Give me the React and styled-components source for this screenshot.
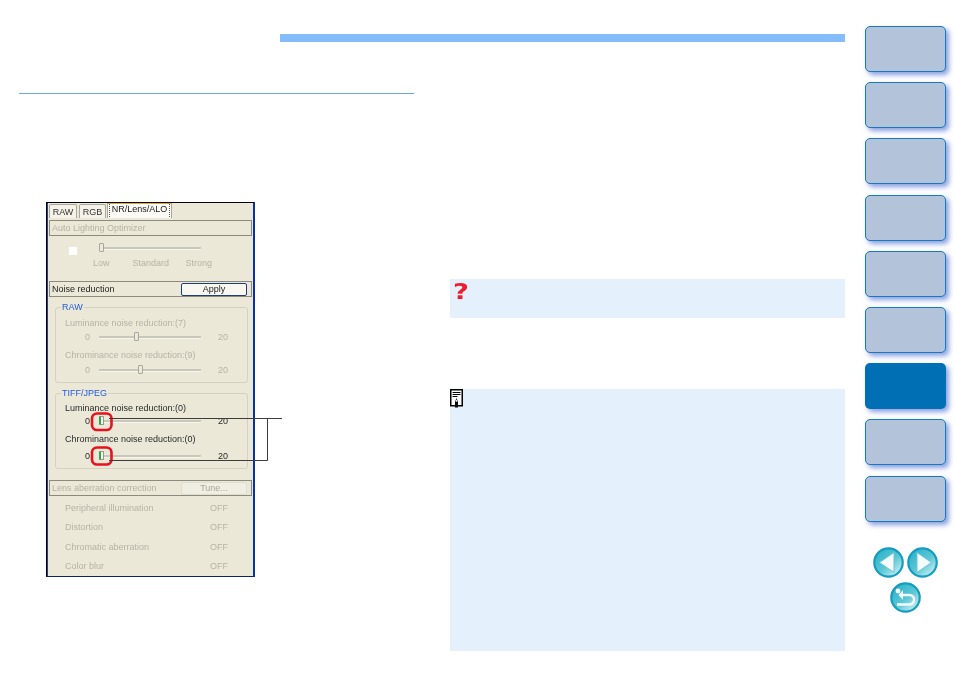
import React from "react";
import styled, { createGlobalStyle } from "styled-components";

const GlobalStyle = createGlobalStyle`
  html, body {
    margin: 0;
    padding: 0;
    background: #fff;
    font-family: "Liberation Sans", Arial, sans-serif;
  }
`;

const NAV_ITEMS = [false, false, false, false, false, false, true, false, false];

const App = () => {
  return (
    <Page>
      <GlobalStyle />
      <Main>
        <TopBar />
        <Columns>
          <LeftColumn>
            <Rule />
            <ShotPanel />
          </LeftColumn>
          <RightColumn>
            <NoteBox $height={39}>
              <QuestionMark>?</QuestionMark>
            </NoteBox>
            <NoteBox $height={262} $gap={71}>
              <MemoIcon />
            </NoteBox>
          </RightColumn>
        </Columns>
      </Main>
      <Nav>
        <NavList>
          {NAV_ITEMS.map((active, i) => (
            <NavButton key={i} $active={active} />
          ))}
        </NavList>
        <Arrows>
          <ArrowRow>
            <RoundIcon kind="prev" />
            <RoundIcon kind="next" />
          </ArrowRow>
          <RoundIcon kind="home" />
        </Arrows>
      </Nav>
    </Page>
  );
};

const ShotPanel = () => (
  <Panel>
    <PanelInner>
      <Tabs>
        <Tab $width={28}>RAW</Tab>
        <Tab $width={27}>RGB</Tab>
        <ActiveTab>
          <span>NR/Lens/ALO</span>
        </ActiveTab>
      </Tabs>

      <SectionHeader $disabled $top={2}>Auto Lighting Optimizer</SectionHeader>
      <AloRow>
        <CheckBox />
        <AloSlider>
          <Slider value={0} />
          <AloLabels>
            <Faint>Low</Faint>
            <Faint>Standard</Faint>
            <Faint>Strong</Faint>
          </AloLabels>
        </AloSlider>
      </AloRow>

      <SectionHeader $top={10}>
        Noise reduction
        <PanelButton>Apply</PanelButton>
      </SectionHeader>

      <Group $top={10} $pad={10}>
        <Legend>RAW</Legend>
        <SliderBlock label="Luminance noise reduction:(7)" value={35} gap={2} height={32} disabled />
        <SliderBlock label="Chrominance noise reduction:(9)" value={39} gap={3} height={32} disabled />
      </Group>

      <Group $top={10} $pad={9}>
        <Legend>TIFF/JPEG</Legend>
        <SliderBlock label="Luminance noise reduction:(0)" value={0} gap={1} height={31} green />
        <SliderBlock label="Chrominance noise reduction:(0)" value={0} gap={5} height={32} green />
      </Group>

      <SectionHeader $disabled $top={11}>
        Lens aberration correction
        <PanelButton $disabled>Tune...</PanelButton>
      </SectionHeader>

      <LensRows>
        {["Peripheral illumination", "Distortion", "Chromatic aberration", "Color blur"].map((name) => (
          <LensRow key={name}>
            <Faint>{name}</Faint>
            <Faint>OFF</Faint>
          </LensRow>
        ))}
      </LensRows>
    </PanelInner>
    <Callouts width="240" height="300" viewBox="0 0 240 300">
      <rect x="45" y="210.5" width="19.5" height="16.5" rx="5" fill="none" stroke="#e8111c" strokeWidth="2.6" />
      <rect x="45" y="244.5" width="19.5" height="17" rx="5" fill="none" stroke="#e8111c" strokeWidth="2.6" />
      <path d="M62 215.5H235M62 257.5H220.5V215.5" fill="none" stroke="#3c3c3c" strokeWidth="1" />
    </Callouts>
  </Panel>
);

const SliderBlock = ({ label, value, gap, height, disabled, green }) => (
  <SliderWrap $height={height}>
    <SliderLabel $disabled={disabled}>{label}</SliderLabel>
    <SliderLine $disabled={disabled} $gap={gap}>
      <span>0</span>
      <Slider value={value} green={green} />
      <span>20</span>
    </SliderLine>
  </SliderWrap>
);

const Slider = ({ value, green }) => (
  <Track>
    <Thumb $green={green} style={{ left: value }} />
  </Track>
);

const MemoIcon = () => (
  <MemoSvg width="14" height="20" viewBox="0 0 14 20">
    <rect x="0.75" y="0.75" width="11.5" height="16" fill="#fff" stroke="#000" strokeWidth="1.5" />
    <path d="M2.5 3.5H10.5M2.5 5.5H10.5M2.5 7.5H7.5" stroke="#000" strokeWidth="1" />
    <path d="M5 13L6.5 9L8 13V18.5H5Z" fill="#000" />
    <rect x="5.9" y="10.8" width="1.3" height="2" fill="#e8e8e8" />
  </MemoSvg>
);

const RoundIcon = ({ kind }) => (
  <svg width="31" height="31" viewBox="0 0 31 31">
    <defs>
      <linearGradient id={`disc-${kind}`} x1="0.15" y1="0.1" x2="0.85" y2="0.9">
        <stop offset="0" stopColor="#2fb4c9" />
        <stop offset="0.55" stopColor="#5cc7d6" />
        <stop offset="1" stopColor="#c4edf1" />
      </linearGradient>
    </defs>
    <circle cx="15.5" cy="15.5" r="14.2" fill={`url(#disc-${kind})`} stroke="#159dbf" strokeWidth="2.2" />
    {kind === "prev" && (
      <path d="M21 5.5V25.5L6.5 15.5Z" fill="#f4fcfd" stroke="#6cc4dc" strokeWidth="1" strokeLinejoin="round" />
    )}
    {kind === "next" && (
      <path d="M10 5.5V25.5L24.5 15.5Z" fill="#f4fcfd" stroke="#6cc4dc" strokeWidth="1" strokeLinejoin="round" />
    )}
    {kind === "home" && (
      <g>
        <circle cx="8" cy="9" r="2.4" fill="#f4fcfd" />
        <path d="M13 8V18L8.5 13Z" fill="#f4fcfd" />
        <path d="M12 13H19C23 13 24.5 16 24 18.5C23.5 21 21.5 22.5 19 22.5H7" fill="none" stroke="#f4fcfd" strokeWidth="2.4" />
      </g>
    )}
  </svg>
);

const Page = styled.div`
  display: flex;
  width: 954px;
  height: 674px;
  overflow: hidden;
  background: #fff;
`;

const Main = styled.div`
  width: 826px;
  margin-left: 19px;
  display: flex;
  flex-direction: column;
`;

const TopBar = styled.div`
  height: 8px;
  margin: 34px 0 0 261px;
  background: #85bcff;
`;

const Columns = styled.div`
  display: flex;
  justify-content: space-between;
  margin-top: 51px;
`;

const LeftColumn = styled.div`
  width: 395px;
`;

const Rule = styled.div`
  height: 1px;
  background: #6ba6ee;
`;

const RightColumn = styled.div`
  width: 395px;
  padding-top: 186px;
`;

const NoteBox = styled.div`
  position: relative;
  height: ${(p) => p.$height}px;
  margin-top: ${(p) => p.$gap || 0}px;
  background: #e4f0fc;
`;

const QuestionMark = styled.span`
  position: absolute;
  left: 3px;
  top: 1px;
  font-family: "DejaVu Sans", sans-serif;
  font-weight: bold;
  font-size: 22px;
  line-height: 24px;
  color: #ee1c2e;
  text-shadow: 0 0 1px #fff;
  transform: scaleX(1.25);
  transform-origin: left top;
`;

const MemoSvg = styled.svg`
  position: absolute;
  left: 0;
  top: 0;
  display: block;
`;

const Panel = styled.div`
  position: relative;
  width: 209px;
  height: 375px;
  margin: 108px 0 0 27px;
  box-sizing: border-box;
  border-top: 1px solid #000;
  border-left: 1px solid #000;
  border-bottom: 1px solid #0a246a;
  border-right: 2px solid #0831a8;
`;

const PanelInner = styled.div`
  height: 100%;
  box-sizing: border-box;
  padding: 0 1px 0 1px;
  background: #ebe8d8;
  border-left: 1px solid #1a3fb0;
  font-size: 9px;
  color: #2a2a2a;
  overflow: hidden;
  filter: blur(0.3px);
`;

const Tabs = styled.div`
  display: flex;
  align-items: flex-end;
  gap: 2px;
  height: 15px;
`;

const Tab = styled.div`
  width: ${(p) => p.$width}px;
  height: 14px;
  box-sizing: border-box;
  border: 1px solid #a8a89a;
  border-bottom: none;
  border-radius: 2px 2px 0 0;
  background: #f5f3e9;
  text-align: center;
  font-size: 9px;
  line-height: 14px;
  color: #333;
`;

const ActiveTab = styled.div`
  width: 65px;
  height: 16px;
  margin-left: -1px;
  box-sizing: border-box;
  border-top: 2px solid #eba22e;
  border-left: 1px solid #a8a89a;
  border-right: 1px solid #a8a89a;
  background: #fbfaf4;
  text-align: center;
  line-height: 11px;
  color: #222;

  span {
    display: block;
    margin: 0 1px;
    height: 13px;
    border-left: 1px dotted #555;
    border-right: 1px dotted #555;
  }
`;

const SectionHeader = styled.div`
  display: flex;
  align-items: center;
  justify-content: space-between;
  height: 16px;
  margin-top: ${(p) => p.$top}px;
  padding: 0 4px 0 2px;
  box-sizing: border-box;
  border: 1px solid #8b8a7c;
  color: ${(p) => (p.$disabled ? "#b5b3a4" : "#222")};
  font-size: 9px;
`;

const PanelButton = styled.div`
  width: 66px;
  height: 13px;
  box-sizing: border-box;
  text-align: center;
  font-size: 9px;
  line-height: 11px;
  border-radius: 2px;
  border: 1px solid ${(p) => (p.$disabled ? "#e0ddce" : "#1c3f78")};
  background: ${(p) => (p.$disabled ? "#f0eee2" : "#f8f7f0")};
  color: ${(p) => (p.$disabled ? "#a8a698" : "#222")};
`;

const AloRow = styled.div`
  display: flex;
  height: 28px;
  padding: 7px 0 0 20px;
`;

const CheckBox = styled.div`
  width: 8px;
  height: 8px;
  margin-top: 4px;
  background: #fff;
`;

const AloSlider = styled.div`
  margin-left: 22px;
  width: 113px;
`;

const AloLabels = styled.div`
  display: flex;
  margin: 8px 0 0 -6px;

  span:nth-child(2) {
    margin: 0 auto 0 23px;
  }
`;

const Faint = styled.span`
  color: #b5b3a4;
`;

const Track = styled.div`
  position: relative;
  width: 102px;
  height: 2px;
  margin-top: 4px;
  background: #c9c7b8;
  border-bottom: 1px solid #f7f6ee;
`;

const Thumb = styled.div`
  position: absolute;
  top: -4px;
  width: 5px;
  height: 9px;
  box-sizing: border-box;
  border-radius: 1px;
  border: 1px solid ${(p) => (p.$green ? "#9a9a8c" : "#a9a79a")};
  border-left: ${(p) => (p.$green ? "2px solid #2fa34f" : "1px solid #a9a79a")};
  background: ${(p) => (p.$green ? "#f2f7ea" : "#ece9dc")};
`;

const Group = styled.div`
  position: relative;
  height: 76px;
  margin: ${(p) => p.$top}px 4px 0 6px;
  padding: ${(p) => p.$pad}px 0 0 9px;
  box-sizing: border-box;
  border: 1px solid #d4d1c2;
  border-radius: 3px;
`;

const Legend = styled.span`
  position: absolute;
  top: -6px;
  left: 5px;
  padding: 0 1px;
  background: #ebe8d8;
  color: #1f5be0;
  font-size: 9px;
  line-height: 11px;
`;

const SliderWrap = styled.div`
  height: ${(p) => p.$height}px;
`;

const SliderLabel = styled.div`
  line-height: 11px;
  color: ${(p) => (p.$disabled ? "#b5b3a4" : "#2a2a2a")};
`;

const SliderLine = styled.div`
  display: flex;
  align-items: center;
  height: 12px;
  margin: ${(p) => p.$gap}px 0 0 20px;
  color: ${(p) => (p.$disabled ? "#b5b3a4" : "#2a2a2a")};

  ${Track} {
    margin: 0 0 0 9px;
  }

  span:last-child {
    margin-left: 17px;
  }
`;

const LensRows = styled.div`
  display: flex;
  flex-direction: column;
  gap: 8.3px;
  padding: 7px 24px 0 16px;
`;

const LensRow = styled.div`
  display: flex;
  justify-content: space-between;
  line-height: 11px;
`;

const Callouts = styled.svg`
  position: absolute;
  left: 0;
  top: 0;
  overflow: visible;
  pointer-events: none;
`;

const Nav = styled.div`
  width: 81px;
  margin-left: 20px;
  padding-top: 26px;
`;

const NavList = styled.div`
  display: flex;
  flex-direction: column;
  gap: 10.2px;
`;

const NavButton = styled.div`
  height: 46px;
  box-sizing: border-box;
  border-radius: 5px;
  border: ${(p) => (p.$active ? "none" : "1.5px solid #1a78bc")};
  background: ${(p) => (p.$active ? "#006fb4" : "#b3c3da")};
  box-shadow: 3px 3px 5px rgba(40, 80, 200, 0.55);
`;

const Arrows = styled.div`
  display: flex;
  flex-direction: column;
  align-items: center;
  gap: 4px;
  margin-top: 25px;

  svg {
    display: block;
  }
`;

const ArrowRow = styled.div`
  display: flex;
  gap: 3px;
`;

export default App;
